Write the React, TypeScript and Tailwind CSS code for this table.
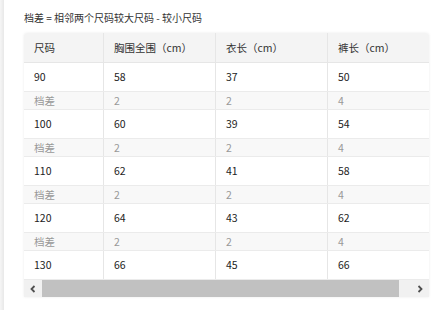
import React from "react";

const rows = [
  { size: "90", a: "58", b: "37", c: "50" },
  { size: "100", a: "60", b: "39", c: "54" },
  { size: "110", a: "62", b: "41", c: "58" },
  { size: "120", a: "64", b: "43", c: "62" },
  { size: "130", a: "66", b: "45", c: "66" },
];
const diff = ["2", "2", "4"];

function Cell({ w, children, cls = "", last = false }: { w: string; children: React.ReactNode; cls?: string; last?: boolean }) {
  return (
    <div className={`${w} shrink-0 pl-[10px] flex items-center ${last ? "" : "border-r border-[#e6e6e6]"} ${cls}`}>
      {children}
    </div>
  );
}

export default function App() {
  return (
    <div
      className="w-[445px] h-[310px] bg-white relative overflow-hidden"
      style={{ fontFamily: '"Microsoft YaHei", "Noto Sans CJK SC", sans-serif' }}
    >
      <div className="absolute left-0 top-0 h-full w-[4px] bg-gradient-to-r from-[#f6f6f6] to-[#e8e8e8]" />
      <div className="pl-[24px] pt-[10px] h-[33px] text-[10px] leading-[15px] text-[#333]">
        档差 = 相邻两个尺码较大尺码 - 较小尺码
      </div>
      <div className="ml-[24px] w-[405px] rounded-t-[3px] shadow-[0_0_3px_rgba(0,0,0,0.08)] overflow-hidden">
        <div className="w-[405px] overflow-hidden">
          <div className="w-[420px]">
            <div className="flex h-[30px] bg-[#f4f4f4] border-b border-[#e6e6e6] text-[10.5px] text-[#333]">
              <Cell w="w-[80px]">尺码</Cell>
              <Cell w="w-[112px]">胸围全围（cm）</Cell>
              <Cell w="w-[112px]">衣长（cm）</Cell>
              <Cell w="w-[116px]" last>裤长（cm）</Cell>
            </div>
            {rows.map((r, i) => (
              <React.Fragment key={r.size}>
                <div className="flex h-[29px] bg-white border-b border-[#ebebeb] text-[10.5px] text-[#222]">
                  <Cell w="w-[80px]">{r.size}</Cell>
                  <Cell w="w-[112px]">{r.a}</Cell>
                  <Cell w="w-[112px]">{r.b}</Cell>
                  <Cell w="w-[116px]" last>{r.c}</Cell>
                </div>
                {i < rows.length - 1 && (
                  <div className="flex h-[18px] bg-[#f8f8f8] border-b border-[#ebebeb] text-[10.5px] text-[#999]">
                    <Cell w="w-[80px]">档差</Cell>
                    <Cell w="w-[112px]">{diff[0]}</Cell>
                    <Cell w="w-[112px]">{diff[1]}</Cell>
                    <Cell w="w-[116px]" last>{diff[2]}</Cell>
                  </div>
                )}
              </React.Fragment>
            ))}
          </div>
        </div>
        <div className="flex h-[17px] bg-[#f1f1f1]">
          <div className="w-[18px] flex items-center justify-center">
            <svg width="8" height="8" viewBox="0 0 8 8">
              <path d="M5.5 1 L2.5 4 L5.5 7" stroke="#505050" strokeWidth="1.8" fill="none" />
            </svg>
          </div>
          <div className="w-[357px] bg-[#c1c1c1]" />
          <div className="flex-1 flex items-center justify-end pr-[5px]">
            <svg width="8" height="8" viewBox="0 0 8 8">
              <path d="M2.5 1 L5.5 4 L2.5 7" stroke="#505050" strokeWidth="1.8" fill="none" />
            </svg>
          </div>
        </div>
      </div>
    </div>
  );
}
